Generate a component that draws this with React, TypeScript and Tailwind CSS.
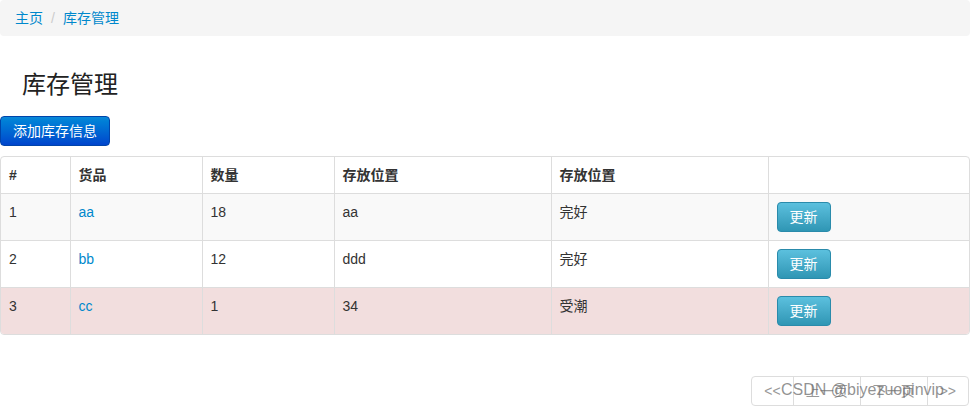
import React from "react";

const rows = [
  { id: "1", name: "aa", qty: "18", loc: "aa", state: "完好", bg: "bg-[#f9f9f9]" },
  { id: "2", name: "bb", qty: "12", loc: "ddd", state: "完好", bg: "bg-white" },
  { id: "3", name: "cc", qty: "1", loc: "34", state: "受潮", bg: "bg-[#f2dede]" },
];

const font = { fontFamily: '"Liberation Sans", "Noto Sans CJK SC", sans-serif' };

export default function App() {
  return (
    <div className="relative w-[976px] h-[409px] bg-white text-[14px] leading-[20px] text-[#333]" style={font}>
      <div className="w-[970px] h-[36px] bg-[#f5f5f5] rounded-[4px] px-[15px] py-[8px] flex items-center">
        <a className="text-[#0088cc]">主页</a>
        <span className="px-[8px] text-[#ccc]">/</span>
        <a className="text-[#0088cc]">库存管理</a>
      </div>
      <h1
        className="mt-[29px] ml-[22px] text-[24px] leading-[40px] font-normal text-[#222]"
        style={{ fontFamily: '"Liberation Serif", "Noto Sans CJK SC", serif' }}
      >
        库存管理
      </h1>
      <button className="mt-[11px] h-[30px] px-[12px] rounded-[4px] border border-[#0044aa] text-white bg-gradient-to-b from-[#0a88d8] to-[#0044cc] text-[14px] leading-[20px] block">
        添加库存信息
      </button>
      <div className="mt-[10px] w-[970px] border border-[#ddd] rounded-[4px] overflow-hidden">
        <table className="w-full border-collapse table-fixed">
          <colgroup>
            <col className="w-[69px]" />
            <col className="w-[132px]" />
            <col className="w-[132px]" />
            <col className="w-[217px]" />
            <col className="w-[217px]" />
            <col />
          </colgroup>
          <thead>
            <tr>
              {["#", "货品", "数量", "存放位置", "存放位置", ""].map((h, i) => (
                <th
                  key={i}
                  className={`text-left font-bold px-[8px] py-[8px] h-[36px] align-top ${i > 0 ? "border-l border-[#ddd]" : ""}`}
                >
                  {h}
                </th>
              ))}
            </tr>
          </thead>
          <tbody>
            {rows.map((r) => (
              <tr key={r.id} className={r.bg}>
                <td className="p-[8px] align-top border-t border-[#ddd]">{r.id}</td>
                <td className="p-[8px] align-top border-t border-l border-[#ddd]">
                  <a className="text-[#0088cc]">{r.name}</a>
                </td>
                <td className="p-[8px] align-top border-t border-l border-[#ddd]">{r.qty}</td>
                <td className="p-[8px] align-top border-t border-l border-[#ddd]">{r.loc}</td>
                <td className="p-[8px] align-top border-t border-l border-[#ddd]">{r.state}</td>
                <td className="p-[8px] align-top border-t border-l border-[#ddd]">
                  <button className="h-[30px] px-[12px] rounded-[4px] border border-[#2a8bab] text-white bg-gradient-to-b from-[#5bc0de] to-[#2f96b4] text-[14px] leading-[20px] block">
                    更新
                  </button>
                </td>
              </tr>
            ))}
          </tbody>
        </table>
      </div>
      <div className="mt-[41px] flex justify-end pr-[7px]">
        <div className="flex border border-[#ddd] rounded-[4px] text-[#999] h-[30px]">
          <span className="px-[12px] leading-[28px]">&lt;&lt;</span>
          <span className="px-[12px] leading-[28px] border-l border-[#ddd]">上一页</span>
          <span className="px-[12px] leading-[28px] border-l border-[#ddd]">下一页</span>
          <span className="px-[12px] leading-[28px] border-l border-[#ddd]">&gt;&gt;</span>
        </div>
      </div>
      <div className="absolute left-[781px] top-[380px] text-[16px] leading-[20px] text-[rgba(110,110,110,0.75)] pointer-events-none">
        CSDN @biyezuopinvip
      </div>
    </div>
  );
}
